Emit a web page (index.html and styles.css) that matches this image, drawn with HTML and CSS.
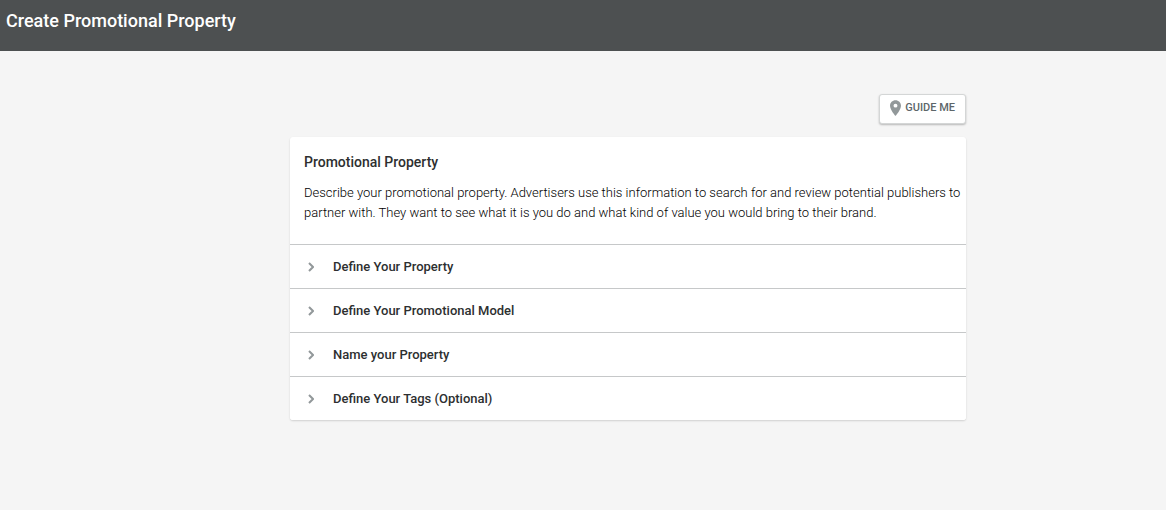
FILE: index.html
```html
<!DOCTYPE html>
<html lang="en">
<head>
<meta charset="utf-8">
<meta name="viewport" content="width=device-width, initial-scale=1">
<title>Create Promotional Property</title>
<link rel="stylesheet" href="styles.css">
</head>
<body>
<header class="header"><h1 class="header-title">Create Promotional Property</h1></header>
<main class="content">
  <div class="toolbar">
    <button class="guide" type="button">
      <svg class="pin" viewBox="5 2 14 20" aria-hidden="true"><path fill-rule="evenodd" d="M12 2C8.130 2 5 5.130 5 9c0 5.250 7 13 7 13s7-7.750 7-13c0-3.870-3.130-7-7-7zm0 9.500a2.500 2.500 0 1 1 0-5 2.500 2.500 0 0 1 0 5z"/></svg>
      <span>GUIDE ME</span>
    </button>
  </div>
  <section class="card">
    <div class="intro">
      <h2 class="card-title">Promotional Property</h2>
      <p class="description">Describe your promotional property. Advertisers use this information to search for and review potential publishers to partner with. They want to see what it is you do and what kind of value you would bring to their brand.</p>
    </div>
    <button class="row" type="button"><svg class="chevron" viewBox="0 0 6 10" aria-hidden="true"><path d="M1 1l4 4-4 4"/></svg><span>Define Your Property</span></button>
    <button class="row" type="button"><svg class="chevron" viewBox="0 0 6 10" aria-hidden="true"><path d="M1 1l4 4-4 4"/></svg><span>Define Your Promotional Model</span></button>
    <button class="row" type="button"><svg class="chevron" viewBox="0 0 6 10" aria-hidden="true"><path d="M1 1l4 4-4 4"/></svg><span>Name your Property</span></button>
    <button class="row" type="button"><svg class="chevron" viewBox="0 0 6 10" aria-hidden="true"><path d="M1 1l4 4-4 4"/></svg><span>Define Your Tags (Optional)</span></button>
  </section>
</main>
</body>
</html>
```
FILE: styles.css
```css
* { box-sizing: border-box; }
body { margin: 0; background: #f5f5f5; color: #2d2f30; font: 13px/20px Roboto, sans-serif; }
.header { background: #4d5051; padding: 9px 6px 18px; }
.header-title { margin: 0; color: #fff; font-size: 18px; line-height: 24px; font-weight: 500; }
.content { padding: 43px 200px 48px 290px; }
.toolbar { display: flex; justify-content: flex-end; margin-bottom: 13px; }
.guide { display: flex; align-items: center; gap: 4px; height: 30px; padding: 0 10px 2px; border: 1px solid #d4d6d6; border-radius: 3px; background: #fff; box-shadow: 0 1px 2px #00000040; color: #5d6669; font: 500 11px/16px Roboto, sans-serif; }
.pin { width: 11px; height: 16px; fill: #92989a; }
.card { background: #fff; border-radius: 3px; box-shadow: 0 1px 2px #00000028; overflow: hidden; }
.intro { padding: 15px 4px 21px 14px; }
.card-title { margin: 0 0 11px; font-size: 14px; line-height: 20px; font-weight: 500; }
.description { margin: 0; font-weight: 300; color: #000; }
.row { display: flex; align-items: center; gap: 19px; width: 100%; height: 44px; padding: 0 18px; border: 0; border-top: 1px solid #c6c8c9; background: #fff; color: #2d2f30; font: 500 13px/20px Roboto, sans-serif; text-align: left; }
.chevron { width: 6px; height: 10px; fill: none; stroke: #92989a; stroke-width: 2; }
@media (max-width: 900px) {
  .content { padding-left: 24px; padding-right: 24px; }
}
```
